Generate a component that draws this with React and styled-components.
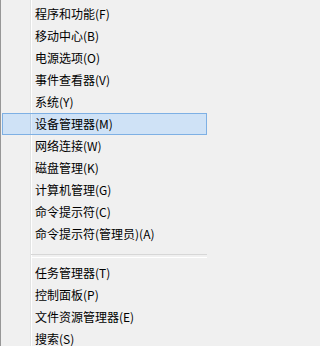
import React from "react";
import styled, { createGlobalStyle } from "styled-components";

const GlobalStyle = createGlobalStyle`
  html, body {
    margin: 0;
    padding: 0;
    background: #f0f0f0;
  }
`;

const groups = [
  [
    "程序和功能(F)",
    "移动中心(B)",
    "电源选项(O)",
    "事件查看器(V)",
    "系统(Y)",
    "设备管理器(M)",
    "网络连接(W)",
    "磁盘管理(K)",
    "计算机管理(G)",
    "命令提示符(C)",
    "命令提示符(管理员)(A)",
  ],
  ["任务管理器(T)", "控制面板(P)", "文件资源管理器(E)", "搜索(S)"],
];

const App = () => {
  return (
    <>
      <GlobalStyle />
      <Menu>
        {groups.map((items, g) => (
          <React.Fragment key={g}>
            {g > 0 && <Separator />}
            {items.map((label) => (
              <Item key={label} $active={label === "设备管理器(M)"}>
                {label}
              </Item>
            ))}
          </React.Fragment>
        ))}
      </Menu>
    </>
  );
};

export default App;

const Menu = styled.div`
  width: 208px;
  height: 346px;
  box-sizing: border-box;
  overflow: hidden;
  padding: 3px 1px 0 1px;
  border-left: 1px solid #979797;
  background-color: #f0f0f0;
  background-image: linear-gradient(
    to right,
    transparent 29px,
    #e2e3e3 29px,
    #e2e3e3 30px,
    #ffffff 30px,
    #ffffff 31px,
    transparent 31px
  );
  font-family: "Noto Sans CJK SC", "Microsoft YaHei", sans-serif;
  font-size: 12px;
  color: #000;
`;

const Item = styled.div`
  height: 22px;
  line-height: 20px;
  box-sizing: border-box;
  padding-left: 32px;
  white-space: nowrap;
  border: 1px solid ${(p) => (p.$active ? "#7eb0e4" : "transparent")};
  background: ${(p) =>
    p.$active
      ? "linear-gradient(to right, transparent 27px, #b7cde4 27px, #b7cde4 28px, #e3eefa 28px, #e3eefa 29px, transparent 29px), #cfe2f6"
      : "transparent"};
`;

const Separator = styled.div`
  height: 2px;
  margin: 9px 0 4px 29px;
  border-top: 1px solid #d7d7d7;
  border-bottom: 1px solid #ffffff;
`;
